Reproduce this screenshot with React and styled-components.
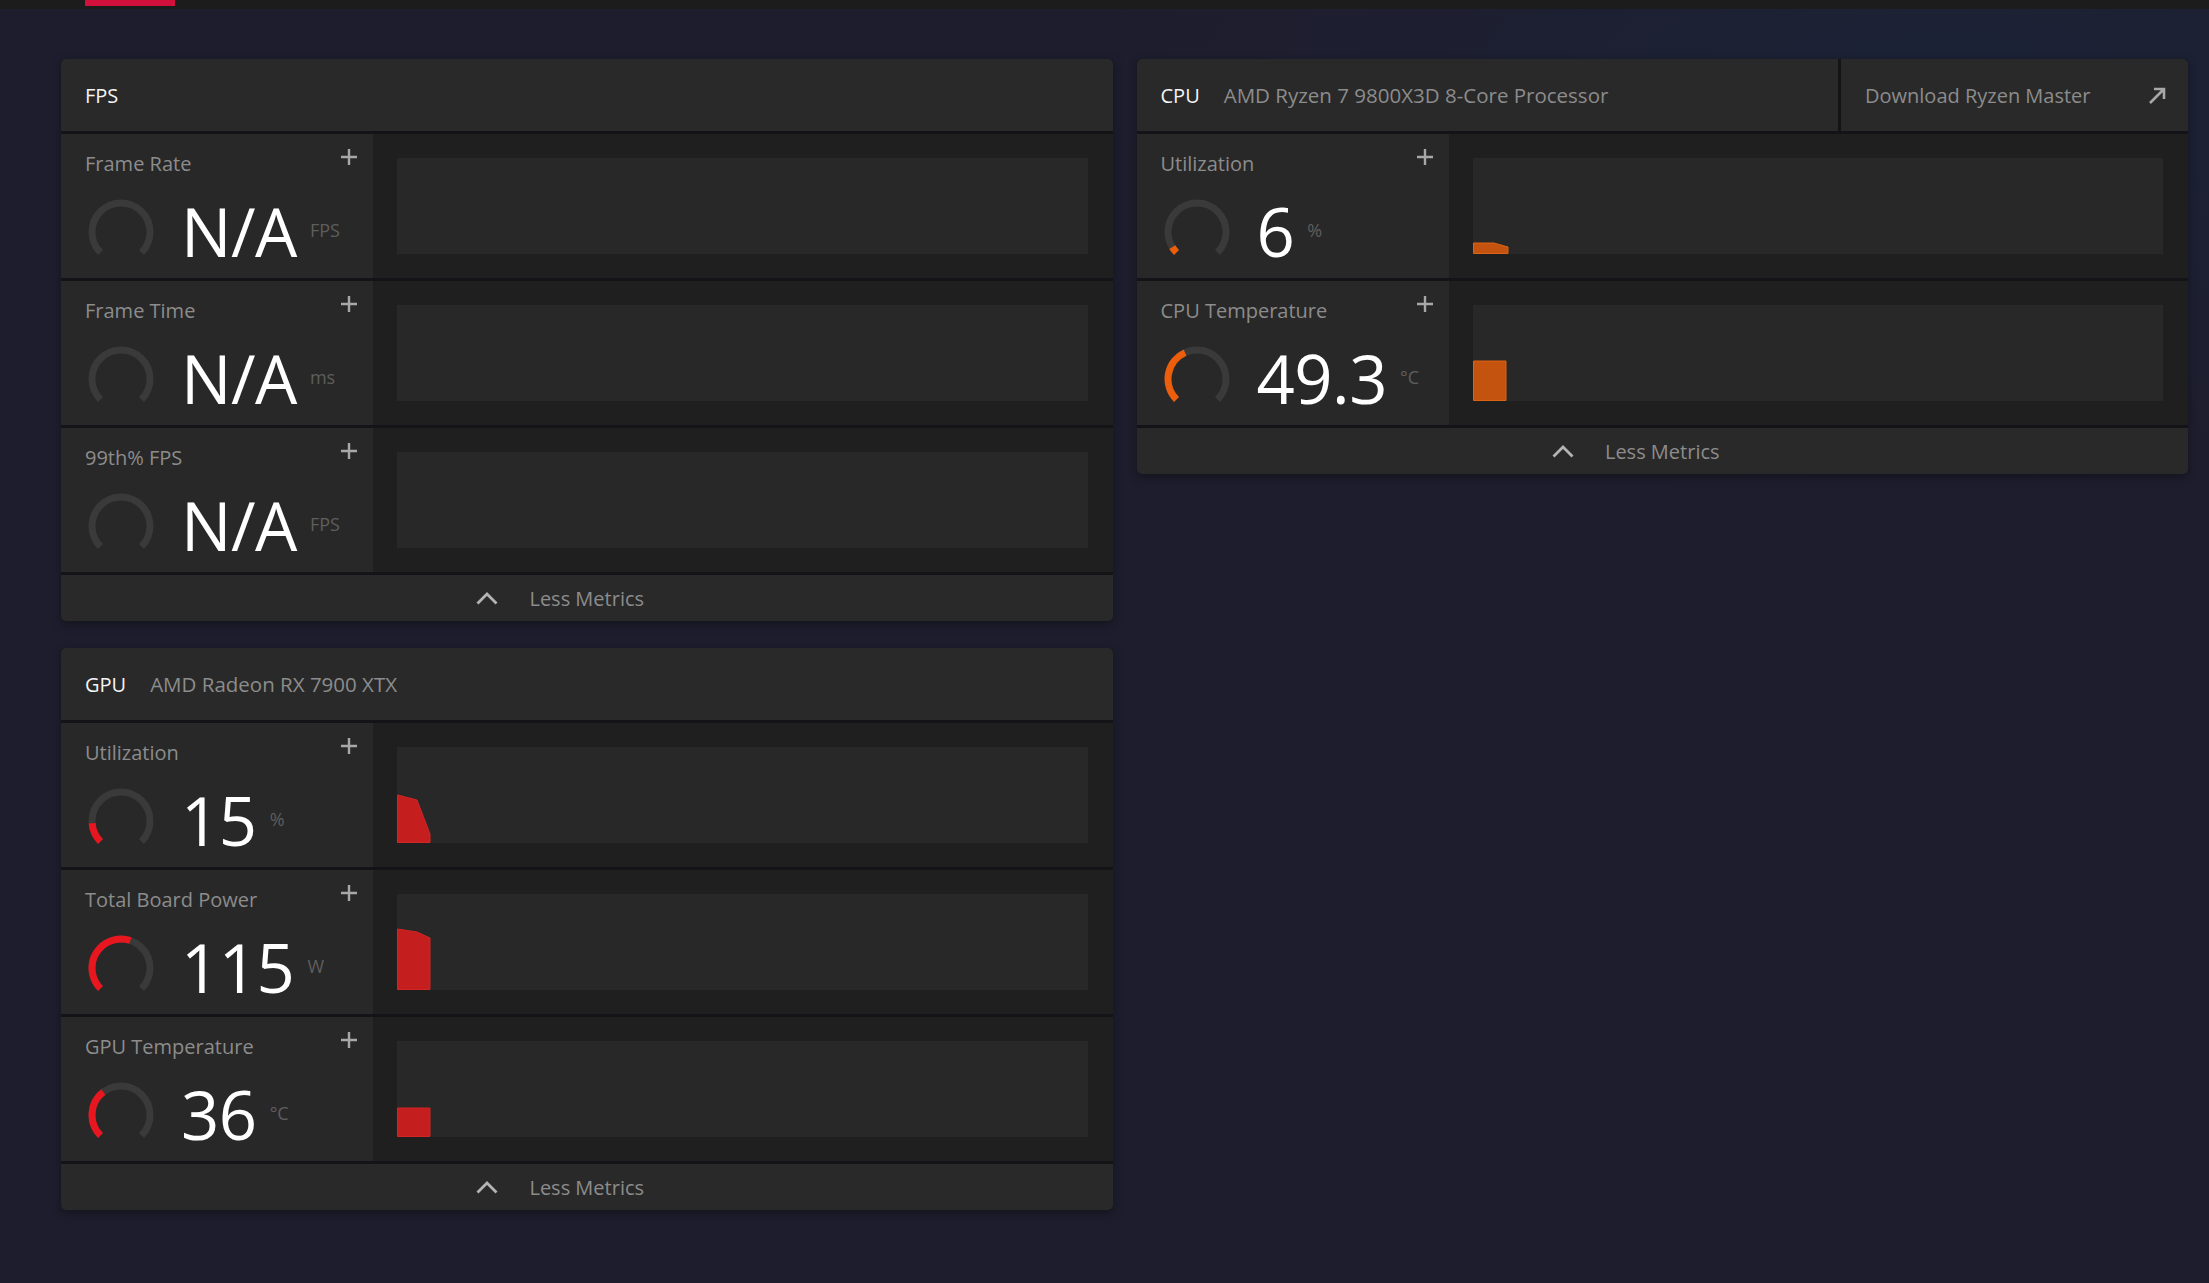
import React from "react";
import styled, { createGlobalStyle } from "styled-components";

const GlobalStyle = createGlobalStyle`
  html, body {
    margin: 0;
    padding: 0;
  }
  body {
    min-height: 100vh;
    background:
      radial-gradient(ellipse 55% 45% at 88% 8%, rgba(27, 35, 55, 0.9), rgba(27, 35, 55, 0) 70%),
      #1e1d2d;
    font-family: "Open Sans", "Noto Sans", sans-serif;
  }
`;

const Page = styled.div`
  min-height: 100vh;
`;

const TopBar = styled.div`
  height: 9px;
  background: #1c1c1c;
  padding-left: 85px;
`;

const TabMarker = styled.div`
  width: 90px;
  height: 6px;
  background: #d1113b;
`;

const Board = styled.div`
  display: grid;
  grid-template-columns: 1fr 1fr;
  column-gap: 24px;
  align-items: start;
  padding: 50px 21px 40px 61px;
`;

const Column = styled.div`
  display: flex;
  flex-direction: column;
  gap: 27px;
`;

const Card = styled.section`
  display: flex;
  flex-direction: column;
  gap: 3px;
  background: #141418;
  border-radius: 5px;
  overflow: hidden;
  box-shadow: 0 3px 10px rgba(0, 0, 0, 0.35);
`;

const CardHeader = styled.header`
  display: flex;
  height: 72px;
  background: #292929;
`;

const HeaderMain = styled.div`
  flex: 1;
  display: flex;
  align-items: center;
  gap: 24px;
  padding: 0 24px;
`;

const HeaderTitle = styled.span`
  color: #f4f4f4;
  font-size: 20px;
  font-weight: 500;
`;

const DeviceName = styled.span`
  color: #8c8c8c;
  font-size: 20.5px;
`;

const DownloadLink = styled.a`
  width: 350px;
  display: flex;
  align-items: center;
  justify-content: space-between;
  padding: 0 21px 0 24px;
  box-sizing: border-box;
  border-left: 3px solid #141418;
  color: #8c8c8c;
  font-size: 20px;
  text-decoration: none;
  cursor: pointer;
`;

const MetricRow = styled.div`
  display: flex;
  height: 144px;
`;

const MetricInfo = styled.div`
  width: 312px;
  flex-shrink: 0;
  box-sizing: border-box;
  padding: 14px 15px 0 24px;
  background: #282828;
`;

const InfoTop = styled.div`
  display: flex;
  justify-content: space-between;
  align-items: flex-start;
`;

const MetricLabel = styled.span`
  margin-top: 4px;
  color: #8c8c8c;
  font-size: 20px;
  line-height: 24px;
`;

const AddButton = styled.button`
  width: 18px;
  height: 18px;
  padding: 0;
  border: none;
  background: none;
  cursor: pointer;
  display: block;
`;

const Reading = styled.div`
  display: flex;
  align-items: center;
  margin-top: 22px;
  padding-left: 3px;
`;

const Value = styled.span`
  margin-left: 27px;
  color: #ffffff;
  font-size: 67px;
  line-height: 1;
  font-weight: 400;
  letter-spacing: -0.5px;
`;

const Unit = styled.span`
  margin-left: 13px;
  margin-bottom: 4px;
  color: #5e5e5e;
  font-size: 18px;
`;

const ChartArea = styled.div`
  flex: 1;
  display: flex;
  padding: 24px 25px 24px 24px;
  background: #1f1f1f;
`;

const ChartBox = styled.div`
  flex: 1;
  height: 96px;
  background: #282828;
`;

const CardFooter = styled.button`
  height: 46px;
  display: flex;
  align-items: center;
  justify-content: center;
  padding-top: 2px;
  border: none;
  background: #292929;
  cursor: pointer;
  font-family: inherit;
`;

const ToggleText = styled.span`
  margin-left: 31px;
  color: #8c8c8c;
  font-size: 20px;
`;

const ToggleSpacer = styled.span`
  width: 53px;
`;

const colors = {
  red: { arc: "#e8161f", fill: "#c41e1e", edge: "#d42525" },
  orange: { arc: "#ec5e0c", fill: "#c4530f", edge: "#dc6313" },
};

const point = (deg, r, c) => {
  const t = (deg * Math.PI) / 180;
  return [c + r * Math.sin(t), c - r * Math.cos(t)];
};

const arcPath = (from, to, r, c) => {
  const [x0, y0] = point(from, r, c);
  const [x1, y1] = point(to, r, c);
  const large = to - from > 180 ? 1 : 0;
  return `M ${x0} ${y0} A ${r} ${r} 0 ${large} 1 ${x1} ${y1}`;
};

// 270 degree dial, open at the bottom
const Gauge = ({ level, tone }) => (
  <svg width="66" height="66" viewBox="0 0 66 66">
    <path d={arcPath(225, 495, 29, 33)} stroke="#3a3a3a" strokeWidth="7" fill="none" />
    {level > 0 && (
      <path
        d={arcPath(225, 225 + 270 * level, 29, 33)}
        stroke={colors[tone].arc}
        strokeWidth="7"
        fill="none"
      />
    )}
  </svg>
);

const PlusIcon = () => (
  <svg width="18" height="18" viewBox="0 0 18 18">
    <path d="M9 1v16M1 9h16" stroke="#a8a8a8" strokeWidth="2.4" />
  </svg>
);

const ChevronIcon = () => (
  <svg width="22" height="13" viewBox="0 0 22 13">
    <polyline points="1.5,11.5 11,2 20.5,11.5" stroke="#b4b4b4" strokeWidth="2.8" fill="none" />
  </svg>
);

const ExternalIcon = () => (
  <svg width="19" height="17" viewBox="0 0 19 17">
    <path d="M2 16L16 2M6 2h10v10" stroke="#a8a8a8" strokeWidth="2.6" fill="none" />
  </svg>
);

// history trace drawn from the left edge of the chart box
const History = ({ points, tone }) =>
  points ? (
    <svg width="40" height="96" viewBox="0 0 40 96" style={{ display: "block" }}>
      <polygon points={points} fill={colors[tone].fill} stroke={colors[tone].edge} strokeWidth="1" />
    </svg>
  ) : null;

const Metric = ({ label, value, unit, level, tone, trace }) => (
  <MetricRow>
    <MetricInfo>
      <InfoTop>
        <MetricLabel>{label}</MetricLabel>
        <AddButton aria-label="Add">
          <PlusIcon />
        </AddButton>
      </InfoTop>
      <Reading>
        <Gauge level={level} tone={tone} />
        <Value>{value}</Value>
        <Unit>{unit}</Unit>
      </Reading>
    </MetricInfo>
    <ChartArea>
      <ChartBox>
        <History points={trace} tone={tone} />
      </ChartBox>
    </ChartArea>
  </MetricRow>
);

const LessMetrics = () => (
  <CardFooter>
    <ChevronIcon />
    <ToggleText>Less Metrics</ToggleText>
    <ToggleSpacer />
  </CardFooter>
);

const fpsMetrics = [
  { label: "Frame Rate", value: "N/A", unit: "FPS", level: 0, tone: "red" },
  { label: "Frame Time", value: "N/A", unit: "ms", level: 0, tone: "red" },
  { label: "99th% FPS", value: "N/A", unit: "FPS", level: 0, tone: "red" },
];

const gpuMetrics = [
  {
    label: "Utilization",
    value: "15",
    unit: "%",
    level: 0.15,
    tone: "red",
    trace: "0.5,48 20,53 33,87 33,95.5 0.5,95.5",
  },
  {
    label: "Total Board Power",
    value: "115",
    unit: "W",
    level: 0.57,
    tone: "red",
    trace: "0.5,35 20,38 33,44 33,95.5 0.5,95.5",
  },
  {
    label: "GPU Temperature",
    value: "36",
    unit: "°C",
    level: 0.36,
    tone: "red",
    trace: "0.5,67 33,67 33,95.5 0.5,95.5",
  },
];

const cpuMetrics = [
  {
    label: "Utilization",
    value: "6",
    unit: "%",
    level: 0.05,
    tone: "orange",
    trace: "0.5,85 21,85 35,89 35,95.5 0.5,95.5",
  },
  {
    label: "CPU Temperature",
    value: "49.3",
    unit: "°C",
    level: 0.41,
    tone: "orange",
    trace: "0.5,56 33,56 33,95.5 0.5,95.5",
  },
];

const App = () => (
  <Page>
    <GlobalStyle />
    <TopBar>
      <TabMarker />
    </TopBar>
    <Board>
      <Column>
        <Card>
          <CardHeader>
            <HeaderMain>
              <HeaderTitle>FPS</HeaderTitle>
            </HeaderMain>
          </CardHeader>
          {fpsMetrics.map((m) => (
            <Metric key={m.label} {...m} />
          ))}
          <LessMetrics />
        </Card>
        <Card>
          <CardHeader>
            <HeaderMain>
              <HeaderTitle>GPU</HeaderTitle>
              <DeviceName>AMD Radeon RX 7900 XTX</DeviceName>
            </HeaderMain>
          </CardHeader>
          {gpuMetrics.map((m) => (
            <Metric key={m.label} {...m} />
          ))}
          <LessMetrics />
        </Card>
      </Column>
      <Column>
        <Card>
          <CardHeader>
            <HeaderMain>
              <HeaderTitle>CPU</HeaderTitle>
              <DeviceName>AMD Ryzen 7 9800X3D 8-Core Processor</DeviceName>
            </HeaderMain>
            <DownloadLink>
              Download Ryzen Master
              <ExternalIcon />
            </DownloadLink>
          </CardHeader>
          {cpuMetrics.map((m) => (
            <Metric key={m.label} {...m} />
          ))}
          <LessMetrics />
        </Card>
      </Column>
    </Board>
  </Page>
);

export default App;
